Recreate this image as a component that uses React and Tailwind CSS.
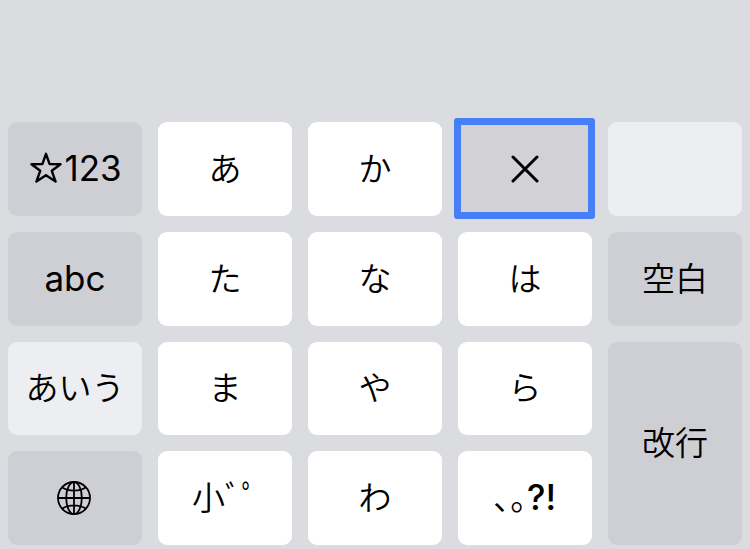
import React from "react";

const KANA = "bg-white";
const DARK = "bg-[#cecfd4]";
const LIGHT = "bg-[#edeef2]";

function Key({ tone = KANA, className = "", label, children }) {
  return (
    <button
      type="button"
      aria-label={label}
      className={`flex min-w-0 items-center justify-center whitespace-nowrap rounded-[9px] ${tone} ${className}`}
    >
      {children}
    </button>
  );
}

function Kana({ children }) {
  return (
    <span className="pb-1 font-['Noto_Sans_CJK_JP',sans-serif] text-[33px] font-[350] leading-10">
      {children}
    </span>
  );
}

function Latin({ className = "", children }) {
  return (
    <span className={`pb-0.5 font-[Inter,sans-serif] text-[35px] leading-10 ${className}`}>
      {children}
    </span>
  );
}

function Star() {
  return (
    <svg aria-hidden="true" viewBox="0 0 32 32" className="mb-0.5 size-8 shrink-0" fill="none" stroke="black" strokeWidth="2.4" strokeLinejoin="round">
      <path d="M16 1.8 L19.6 12.1 L30.5 12.3 L21.8 18.8 L25.6 29.6 L16 23.2 L6.4 29.6 L10.2 18.8 L1.5 12.3 L12.4 12.1 Z" />
    </svg>
  );
}

function Cross() {
  return (
    <svg aria-hidden="true" viewBox="0 0 28 28" className="mt-0.5 size-7" fill="none" stroke="black" strokeWidth="3" strokeLinecap="round">
      <path d="M2 2 L26 26 M26 2 L2 26" />
    </svg>
  );
}

function Globe() {
  return (
    <svg aria-hidden="true" viewBox="0 0 34 34" className="mr-0.5 size-[34px]" fill="none" stroke="black" strokeWidth="1.8">
      <circle cx="17" cy="17" r="16" />
      <ellipse cx="17" cy="17" rx="7.8" ry="16" />
      <path d="M17 1 V33 M1 17 H33 M5 6.2 Q10 9.6 17 9.6 T29 6.2 M5 27.8 Q10 24.4 17 24.4 T29 27.8" />
    </svg>
  );
}

export default function App() {
  return (
    <main lang="ja" className="flex min-h-screen flex-col bg-[#dbdce0] px-2 pb-1 pt-[122px] text-black">
      <div className="grid flex-1 grid-cols-5 grid-rows-4 gap-4">
        <Key tone={DARK} className="gap-0.5 pl-0.5">
          <Star />
          <Latin>123</Latin>
        </Key>
        <Key><Kana>あ</Kana></Key>
        <Key><Kana>か</Kana></Key>
        <button
          type="button"
          aria-label="閉じる"
          className="-mb-[3px] -ml-1 -mr-[3px] -mt-1 flex items-center justify-center rounded-[3px] border-[7px] border-[#467ff7] bg-[#d2d1d6]"
        >
          <Cross />
        </button>
        <Key tone={LIGHT} label="削除" />

        <Key tone={DARK}><Latin>abc</Latin></Key>
        <Key><Kana>た</Kana></Key>
        <Key><Kana>な</Kana></Key>
        <Key><Kana>は</Kana></Key>
        <Key tone={DARK}><Kana>空白</Kana></Key>

        <Key tone={LIGHT}><Kana>あいう</Kana></Key>
        <Key><Kana>ま</Kana></Key>
        <Key><Kana>や</Kana></Key>
        <Key><Kana>ら</Kana></Key>
        <Key tone={DARK} className="row-span-2"><Kana>改行</Kana></Key>

        <Key tone={DARK} label="キーボードを切り替え"><Globe /></Key>
        <Key><Kana>小ﾞﾟ</Kana></Key>
        <Key><Kana>わ</Kana></Key>
        <Key>
          <Kana>､｡</Kana>
          <Latin className="font-medium">?!</Latin>
        </Key>
      </div>
    </main>
  );
}
